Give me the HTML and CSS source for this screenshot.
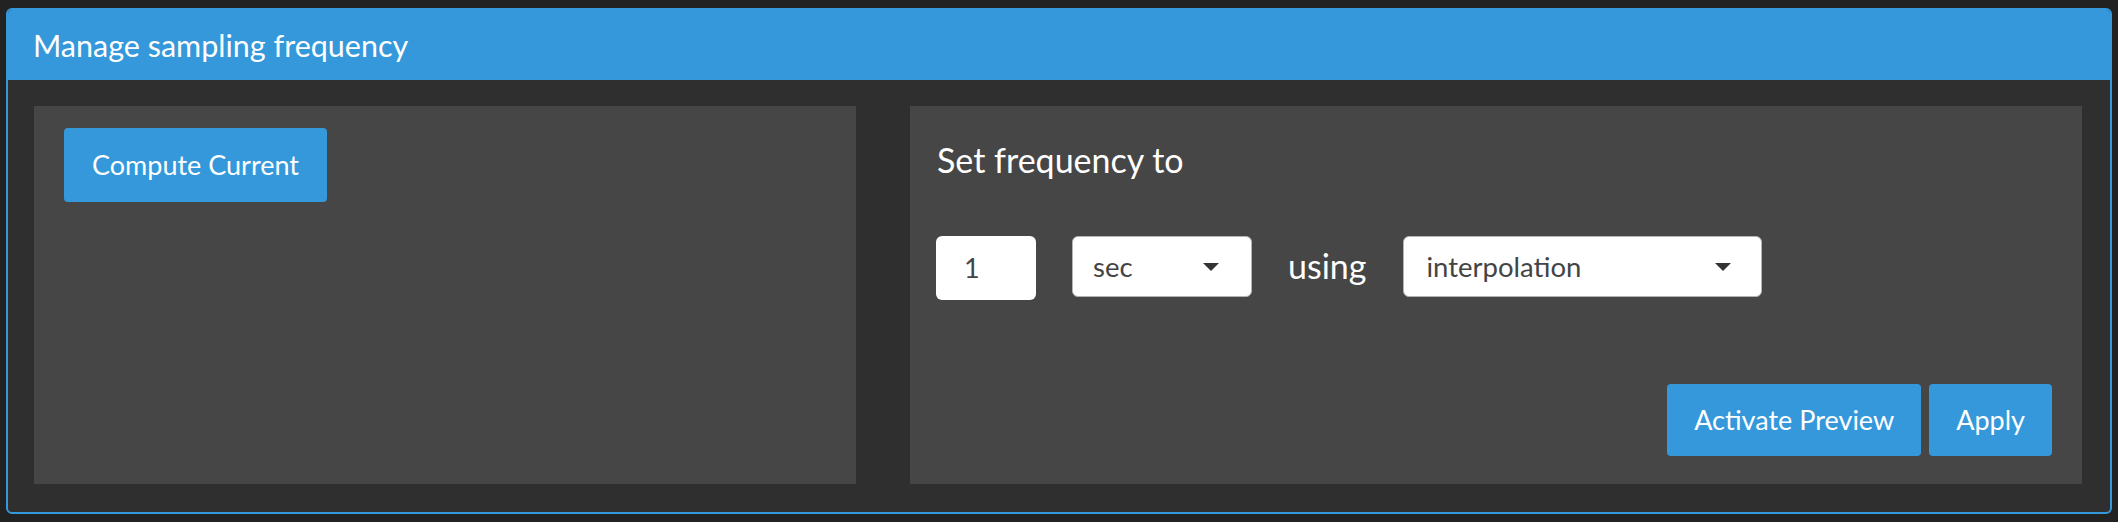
FILE: index.html
```html
<!DOCTYPE html>
<html>
<head>
<meta charset="utf-8">
<link rel="stylesheet" href="styles.css">
</head>
<body>
<div class="panel">
  <div class="panel-heading">Manage sampling frequency</div>
  <div class="panel-body">
    <div class="well well-left">
      <button class="btn">Compute Current</button>
    </div>
    <div class="well well-right">
      <h4 class="set-title">Set frequency to</h4>
      <div class="freq-row">
        <div class="num-input">1</div>
        <div class="select select-unit"><span>sec</span><span class="caret"></span></div>
        <span class="using">using</span>
        <div class="select select-method"><span>interpolation</span><span class="caret"></span></div>
      </div>
      <div class="actions">
        <button class="btn">Activate Preview</button>
        <button class="btn">Apply</button>
      </div>
    </div>
  </div>
</div>
</body>
</html>
```
FILE: styles.css
```css
* { box-sizing: border-box; }
html, body { margin: 0; }
body {
  background: #222222;
  padding: 8px 6px;
  font-family: Lato, "Open Sans", sans-serif;
  height: 522px;
}
.panel {
  border: 2px solid #3498db;
  border-radius: 6px;
  background: #2f2f2f;
  overflow: hidden;
}
.panel-heading {
  background: #3498db;
  height: 70px;
  padding: 0 25px;
  display: flex;
  align-items: center;
  color: #fff;
  font-size: 30.5px;
  line-height: 36px;
}
.panel-body {
  padding: 26px 28px 28px 26px;
  display: grid;
  grid-template-columns: 822px 1172px;
  column-gap: 54px;
}
.well {
  background: #464646;
  height: 378px;
}
.well-left {
  padding: 22px 30px;
}
.btn {
  font-family: Lato, "Open Sans", sans-serif;
  font-size: 27px;
  color: #fff;
  background: #3498db;
  border: none;
  border-radius: 4px;
  padding: 0 27px;
  height: 72px;
  line-height: 72px;
}
.well-left .btn {
  height: 74px;
  padding: 0 28px;
}
.well-right {
  display: flex;
  flex-direction: column;
  padding: 34px 30px 28px 26px;
}
.set-title {
  margin: 0;
  font-weight: normal;
  font-size: 34px;
  line-height: 40px;
  color: #fff;
  padding-left: 1px;
}
.freq-row {
  margin-top: 56px;
  display: flex;
  align-items: flex-start;
  gap: 36px;
}
.num-input {
  width: 100px;
  height: 64px;
  background: #fff;
  border-radius: 6px;
  color: #444;
  font-size: 27px;
  line-height: 64px;
  padding-left: 28px;
}
.select {
  height: 61px;
  background: #fff;
  border: 1px solid #b3b3b3;
  border-radius: 6px;
  color: #444;
  font-size: 27.5px;
  display: flex;
  align-items: center;
  justify-content: space-between;
}
.select-unit {
  width: 180px;
  padding: 0 32px 0 20px;
}
.select-method {
  width: 359px;
  padding: 0 30px 0 23px;
}
.caret {
  width: 0;
  height: 0;
  border-left: 8px solid transparent;
  border-right: 8px solid transparent;
  border-top: 8px solid #333;
}
.using {
  color: #fff;
  font-size: 34px;
  line-height: 64px;
  margin-top: -2px;
}
.actions {
  margin-top: auto;
  display: flex;
  justify-content: flex-end;
  gap: 8px;
}
```
